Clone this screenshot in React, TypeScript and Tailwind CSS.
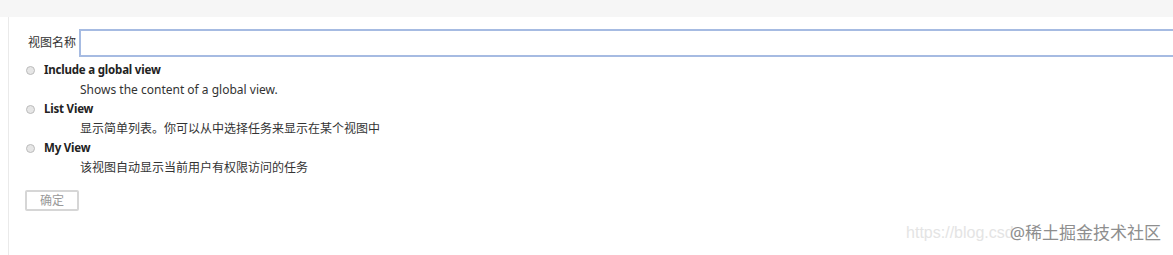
export default function App() {
  const views = [
    { name: "Include a global view", desc: "Shows the content of a global view." },
    { name: "List View", desc: "显示简单列表。你可以从中选择任务来显示在某个视图中" },
    { name: "My View", desc: "该视图自动显示当前用户有权限访问的任务" },
  ]

  return (
    <div className="relative h-[255px] w-[1173px] overflow-hidden bg-white font-['Noto_Sans','Noto_Sans_CJK_SC',sans-serif] text-[12px] text-[#333]">
      {/* top bar */}
      <div className="h-[17px] bg-[#f6f6f6]" />

      <div className="ml-[8px] h-[238px] border-l border-[#eaeaea] pl-[16px] pt-[12px]">
        {/* view name */}
        <div className="flex items-center">
          <label className="ml-[3px] w-[51px] shrink-0 whitespace-nowrap leading-[28px]">视图名称</label>
          <input className="h-[28px] w-[1130px] shrink-0 border-2 border-[#a6bbe2] bg-white outline-none" />
        </div>

        {/* view types */}
        <div className="mt-[3px]">
          {views.map((v) => (
            <div key={v.name} className="h-[39px]">
              <div className="flex h-[20px] items-center">
                <span className="ml-[1px] mr-[9px] h-[9px] w-[9px] rounded-full border border-[#bbb] bg-[#e6e6e6]" />
                <span className="text-[11.5px] font-bold tracking-[-0.2px] text-[#222]">{v.name}</span>
              </div>
              <div className="ml-[55px] h-[19px] leading-[19px]">{v.desc}</div>
            </div>
          ))}
        </div>

        <button className="mt-[13px] h-[21px] w-[54px] rounded-[2px] border-2 border-[#d6d6d6] bg-white text-[12px] leading-[17px] text-[#999]">
          确定
        </button>
      </div>

      {/* watermark */}
      <div className="absolute bottom-[10px] right-[12px] flex items-end">
        <span className="font-['Liberation_Sans',sans-serif] text-[16px] text-[#e4e4e4]">https://blog.csd</span>
        <span className="-ml-[4px] text-[17px] text-[#8e8e8e] [text-shadow:0_0_2px_#fff]">@稀土掘金技术社区</span>
      </div>
    </div>
  )
}
